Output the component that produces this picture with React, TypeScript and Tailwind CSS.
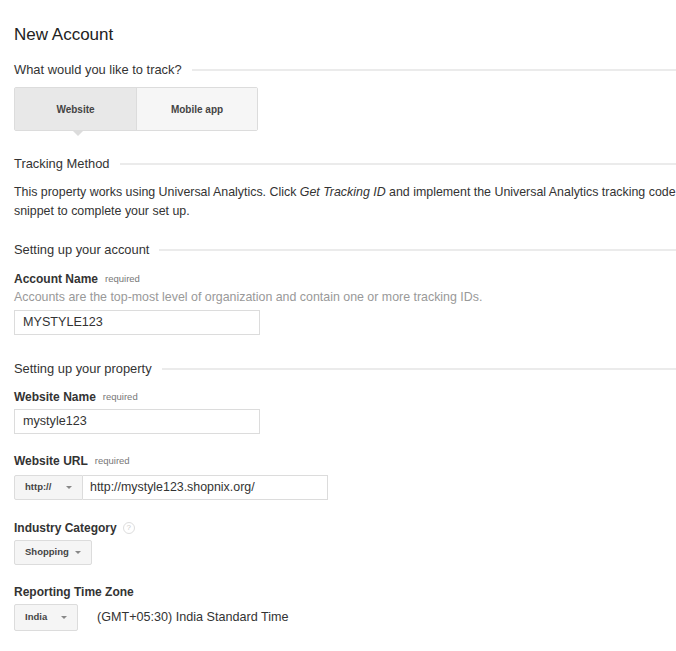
import React from 'react';

const font = { fontFamily: '"Liberation Sans", Arial, sans-serif' };

function SectionHeader({ title, className = '' }: { title: string; className?: string }) {
  return (
    <div className={`flex items-center h-[16px] ${className}`}>
      <span className="text-[12.9px] leading-[16px] text-[#333] whitespace-nowrap">{title}</span>
      <div className="flex-1 ml-[10px] h-[2px] bg-[#ebebeb]" />
    </div>
  );
}

function Label({ text, required, help, className = '' }: { text: string; required?: boolean; help?: boolean; className?: string }) {
  return (
    <div className={`flex items-center h-[14px] ${className}`}>
      <span className="text-[12px] leading-[14px] font-bold text-[#333]">{text}</span>
      {required && <span className="ml-[7px] text-[9.5px] leading-[14px] text-[#777]">required</span>}
      {help && (
        <span className="ml-[6px] w-[12px] h-[12px] rounded-full border border-[#ddd] text-[8px] leading-[10px] text-[#ccc] flex items-center justify-center">
          ?
        </span>
      )}
    </div>
  );
}

function Caret() {
  return (
    <span className="inline-block w-0 h-0 border-l-[3px] border-r-[3px] border-t-[3px] border-l-transparent border-r-transparent border-t-[#888]" />
  );
}

function SelectBtn({ label, w, h, className = '' }: { label: string; w: string; h: string; className?: string }) {
  return (
    <div className={`flex items-center justify-between ${w} ${h} bg-[#f5f5f5] border border-[#dcdcdc] rounded-[2px] pl-[10px] pr-[10px] ${className}`}>
      <span className="text-[9.5px] font-bold text-[#444]">{label}</span>
      <Caret />
    </div>
  );
}

export default function App() {
  return (
    <div className="w-[676px] h-[651px] bg-white pl-[14px] pt-[25px]" style={font}>
      <div className="text-[17px] leading-[20px] text-[#222]">New Account</div>

      <SectionHeader title="What would you like to track?" className="mt-[17px]" />

      <div className="relative mt-[9px] flex w-[244px] h-[44px] border border-[#dcdcdc] rounded-[2px]">
        <div className="w-[122px] bg-[#e8e8e8] border-r border-[#dcdcdc] flex items-center justify-center text-[10px] font-bold text-[#444]">
          Website
        </div>
        <div className="flex-1 bg-[#f6f6f6] flex items-center justify-center text-[10px] font-bold text-[#444]">
          Mobile app
        </div>
        <span className="absolute left-[58px] top-[43px] w-0 h-0 border-l-[5px] border-r-[5px] border-t-[5px] border-l-transparent border-r-transparent border-t-[#dcdcdc]" />
      </div>

      <SectionHeader title="Tracking Method" className="mt-[25px]" />

      <p className="mt-[11px] text-[12.4px] leading-[19px] text-[#333]">
        This property works using Universal Analytics. Click <i>Get Tracking ID</i> and implement the Universal Analytics tracking code snippet to complete your set up.
      </p>

      <SectionHeader title="Setting up your account" className="mt-[21px]" />

      <Label text="Account Name" required className="mt-[14px]" />
      <div className="mt-[4px] text-[12.4px] leading-[14px] text-[#999]">
        Accounts are the top-most level of organization and contain one or more tracking IDs.
      </div>
      <div className="mt-[6px] w-[246px] h-[25px] border border-[#dcdcdc] flex items-center pl-[8px] text-[12.6px] text-[#333]">
        MYSTYLE123
      </div>

      <SectionHeader title="Setting up your property" className="mt-[26px]" />

      <Label text="Website Name" required className="mt-[13px]" />
      <div className="mt-[5px] w-[246px] h-[25px] border border-[#dcdcdc] flex items-center pl-[8px] text-[12.6px] text-[#333]">
        mystyle123
      </div>

      <Label text="Website URL" required className="mt-[20px]" />
      <div className="mt-[7px] flex h-[25px]">
        <SelectBtn label="http://" w="w-[69px]" h="h-[25px]" className="rounded-r-none" />
        <div className="w-[245px] h-[25px] border border-l-0 border-[#dcdcdc] flex items-center pl-[7px] text-[12.4px] text-[#333]">
          http://mystyle123.shopnix.org/
        </div>
      </div>

      <Label text="Industry Category" help className="mt-[21px]" />
      <SelectBtn label="Shopping" w="w-[78px]" h="h-[25px]" className="mt-[5px]" />

      <Label text="Reporting Time Zone" className="mt-[20px]" />
      <div className="mt-[5px] flex items-center">
        <SelectBtn label="India" w="w-[64px]" h="h-[27px]" />
        <span className="ml-[19px] text-[12.6px] text-[#333]">(GMT+05:30) India Standard Time</span>
      </div>
    </div>
  );
}
